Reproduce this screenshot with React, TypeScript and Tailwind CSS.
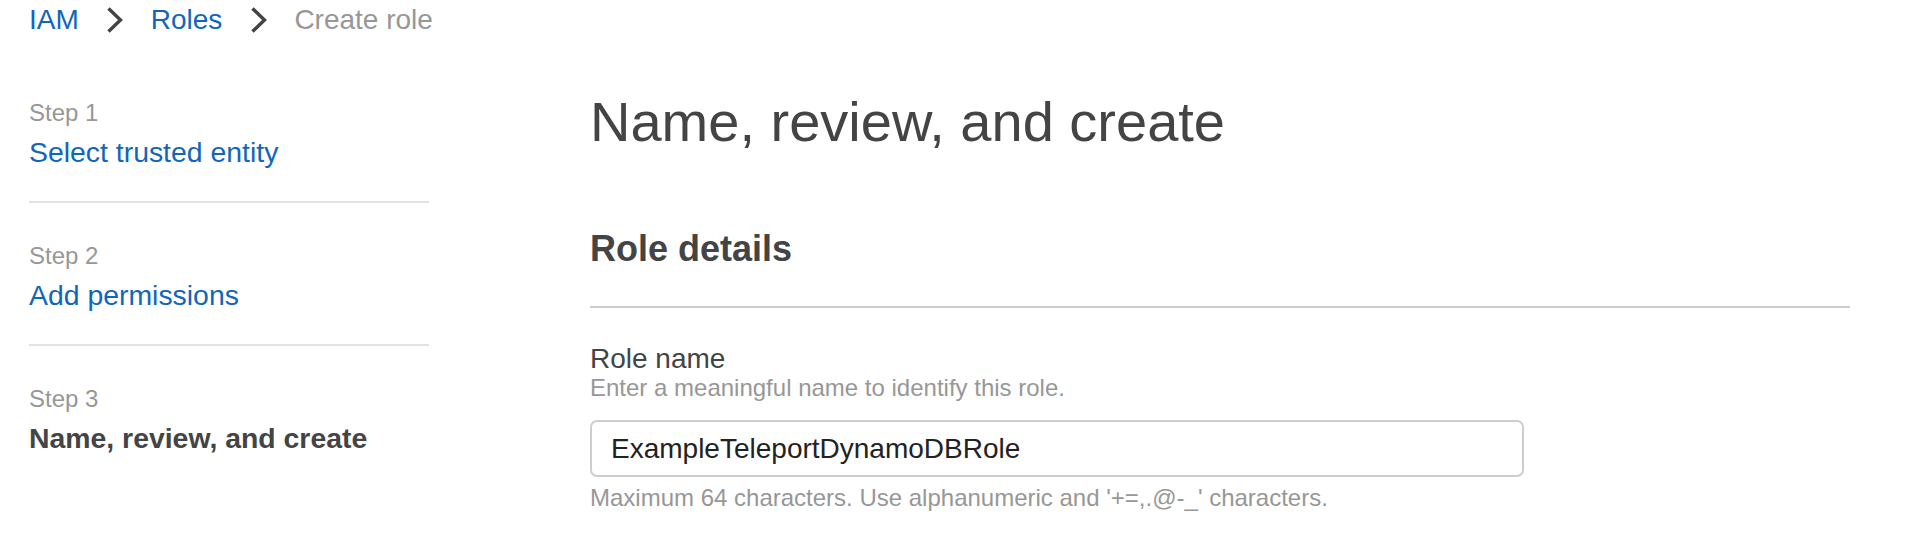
import React from 'react';

const steps = [
  { label: 'Step 1', title: 'Select trusted entity', current: false },
  { label: 'Step 2', title: 'Add permissions', current: false },
  { label: 'Step 3', title: 'Name, review, and create', current: true },
];

function Chevron() {
  return (
    <svg width="17" height="26" viewBox="0 0 17 26" fill="none" aria-hidden="true">
      <polyline
        points="2.5,1.5 14.5,13 2.5,24.5"
        stroke="#444444"
        strokeWidth="3.4"
        strokeLinecap="butt"
        strokeLinejoin="miter"
      />
    </svg>
  );
}

function Breadcrumb() {
  return (
    <nav className="flex items-center gap-[27.5px] pt-[6px] text-[28px] leading-[28px]">
      <a className="text-[#1166bb]">IAM</a>
      <Chevron />
      <a className="text-[#1166bb]">Roles</a>
      <Chevron />
      <span className="text-[#979797]">Create role</span>
    </nav>
  );
}

function StepNav() {
  return (
    <aside className="w-[400px] shrink-0 pt-[66.5px]">
      {steps.map((step, i) => (
        <div key={step.label}>
          {i > 0 && <div className="mt-[35px] mb-[41px] h-[2px] bg-[#e2e2e2]" />}
          <div className="text-[24px] leading-none text-[#979797]">{step.label}</div>
          <div
            className={
              step.current
                ? 'mt-[13px] text-[28.4px] leading-[28px] font-bold text-[#444444]'
                : 'mt-[13px] text-[28.4px] leading-[28px] text-[#1166bb]'
            }
          >
            {step.title}
          </div>
        </div>
      ))}
    </aside>
  );
}

export default function App() {
  return (
    <div
      className="min-h-[536px] bg-white px-[29px] text-[#444444]"
      style={{ fontFamily: '"Liberation Sans", Arial, sans-serif' }}
    >
      <Breadcrumb />

      <div className="flex">
        <StepNav />

        <main className="ml-[161px] w-[1260px]">
          <h1 className="mt-[60px] text-[56px] leading-none font-normal text-[#444444]">
            Name, review, and create
          </h1>

          <h2 className="mt-[81px] text-[36px] leading-none font-bold text-[#444444]">Role details</h2>
          <div className="mt-[38.5px] h-[2px] bg-[#cccccc]" />

          <label className="mt-[37.5px] block text-[28px] leading-none text-[#444444]">Role name</label>
          <p className="mt-[3px] text-[24px] leading-none text-[#979797]">
            Enter a meaningful name to identify this role.
          </p>
          <input
            readOnly
            value="ExampleTeleportDynamoDBRole"
            className="mt-[20px] block h-[57px] w-[934px] rounded-[7px] border-2 border-[#cdcdcd] bg-white pl-[19px] text-[28px] text-[#222222] outline-none"
          />
          <p className="mt-[9px] text-[24px] leading-none text-[#979797]">
            Maximum 64 characters. Use alphanumeric and '+=,.@-_' characters.
          </p>
        </main>
      </div>
    </div>
  );
}
